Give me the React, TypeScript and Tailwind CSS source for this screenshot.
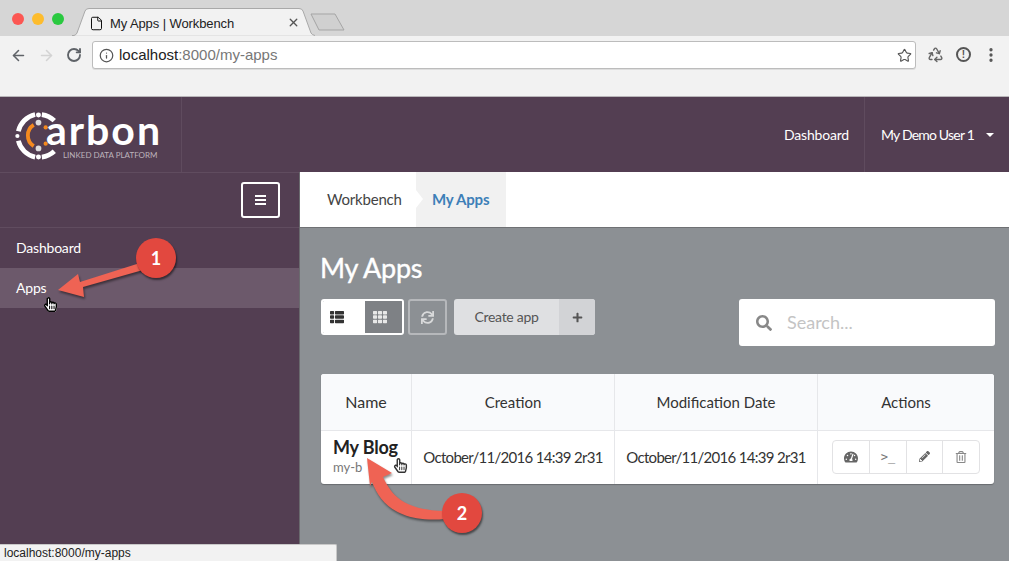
import { ArrowLeft, ArrowRight, RotateCw, Info, Star, Recycle, EllipsisVertical, X, File } from 'lucide-react'
import { FaThList, FaTh, FaSync, FaPlus, FaSearch, FaTachometerAlt, FaPencilAlt, FaRegTrashAlt, FaRegHandPointer, FaHandPointer } from 'react-icons/fa'

function BrowserChrome() {
  return (
    <div className="h-[97px] shrink-0 flex flex-col border-b border-[#b9b6b9] font-['Liberation_Sans',sans-serif]">
      {/* tab strip */}
      <div className="h-[36px] bg-[#d6d6d6] flex items-end">
        <div className="flex gap-[8px] pl-[12px] w-[72px] h-full pt-[13px]">
          <span className="w-3 h-3 rounded-full bg-[#fc5753]" />
          <span className="w-3 h-3 rounded-full bg-[#fdbc2d]" />
          <span className="w-3 h-3 rounded-full bg-[#2ac940]" />
        </div>
        <div className="relative w-[244px] h-[28px] flex items-center pl-[17px] pt-[3px]">
          <svg className="absolute inset-0" width="244" height="28" viewBox="0 0 244 28">
            <path d="M0 27.5 H2 Q4 27 5 25 L13 3 Q14 .5 17 .5 H227 Q230 .5 231 3 L239 25 Q240 27 243 27.5" fill="#f2f2f2" stroke="#a9a9a9" />
          </svg>
          <File size={15} strokeWidth={1.6} className="relative text-[#111]" />
          <span className="relative ml-[6px] text-[13px] tracking-[-0.1px] text-[#222]">My Apps | Workbench</span>
          <X size={13} strokeWidth={2.5} className="absolute left-[215px] top-[8px] text-[#555]" />
        </div>
        <svg width="36" height="20" viewBox="0 0 36 20" className="-ml-[6px] mb-[3px]">
          <path d="M1 1 H25 L34 17 H9 Z" fill="#d0d0d0" stroke="#a5a5a5" strokeLinejoin="round" />
        </svg>
      </div>
      {/* toolbar */}
      <div className="flex-1 bg-[#f2f2f2] flex items-start pt-[5px] pl-[10px] pr-[9px]">
        <ArrowLeft size={17} strokeWidth={2.2} className="text-[#5f6368] mt-[6px]" />
        <ArrowRight size={17} strokeWidth={2.2} className="text-[#d3d3d3] ml-[11px] mt-[6px]" />
        <RotateCw size={16} strokeWidth={2.8} className="text-[#5f6368] ml-[11px] mt-[6px]" />
        <div className="ml-[10px] w-[824px] h-[28px] bg-white border border-[#bcbcbc] rounded-[3px] flex items-center pl-[6px] pr-[3px] shadow-[0_1px_0_#ddd]">
          <Info size={15} strokeWidth={2} className="text-[#555]" />
          <span className="ml-[5px] text-[15px] text-[#222]">localhost<span className="text-[#777]">:8000/my-apps</span></span>
          <Star size={15} strokeWidth={1.8} className="ml-auto text-[#555]" />
        </div>
        <Recycle size={17} strokeWidth={2} className="ml-[11px] mt-[5px] text-[#666]" />
        <span className="ml-[12px] mt-[6px] w-[15px] h-[15px] rounded-full border-2 border-[#555] flex items-center justify-center text-[10px] leading-none font-bold text-[#555]">!</span>
        <EllipsisVertical size={18} strokeWidth={2.4} className="ml-[11px] mt-[5px] text-[#555]" />
      </div>
    </div>
  )
}

function CarbonLogo() {
  return (
    <div className="flex items-start">
      <svg width="46" height="50" viewBox="0 0 48 50" className="mt-[1px] shrink-0">
        <g fill="none" stroke="#fff" strokeWidth="5">
          <path d="M3.5 20 A23 23 0 0 1 21 2.6" />
          <path d="M28 2.6 A23 23 0 0 1 41 9" />
          <path d="M3.5 30 A23 23 0 0 0 21 47" />
          <path d="M28 47 A23 23 0 0 0 41 41" />
        </g>
        <circle cx="24.5" cy="3" r="2.6" fill="#fff" />
        <circle cx="24.5" cy="47" r="2.6" fill="#fff" />
        <circle cx="2.5" cy="25" r="2.2" fill="#fff" />
        <circle cx="24.5" cy="11" r="3" fill="#ddd" />
        <circle cx="24.5" cy="38" r="3" fill="#ddd" />
        <circle cx="32" cy="16" r="2.2" fill="#f58a1f" />
        <circle cx="32" cy="33" r="2.2" fill="#f58a1f" />
        <path d="M19.5 13.5 A13 13 0 0 0 19.5 35.5" fill="none" stroke="#f58a1f" strokeWidth="4" />
      </svg>
      <div className="flex flex-col -ml-[15px]">
        <span className="text-[41px] leading-[38px] font-bold tracking-[2px] text-white mt-[1px]">arbon</span>
        <span className="text-[8px] leading-[10px] text-[#bdb3bb] ml-[17px] mt-[1px] whitespace-nowrap">LINKED DATA PLATFORM</span>
      </div>
    </div>
  )
}

function Header() {
  return (
    <div className="h-[75px] shrink-0 bg-[#533e52] flex text-white">
      <div className="w-[182px] border-r border-[#5f4b5e] pl-[15px] pt-[13px]">
        <CarbonLogo />
      </div>
      <div className="flex-1 flex justify-end">
        <span className="self-center text-[14px] tracking-[-0.2px] mr-[15px]">Dashboard</span>
        <div className="w-[145px] border-l border-[#5f4b5e] flex items-center pl-[16px] text-[14px] tracking-[-0.8px] whitespace-nowrap">
          My Demo User 1
          <span className="ml-[12px] w-0 h-0 border-x-[4px] border-x-transparent border-t-[4px] border-t-white" />
        </div>
      </div>
    </div>
  )
}

function Sidebar() {
  return (
    <div className="w-[300px] shrink-0 bg-[#533e52] text-white text-[14px] tracking-[-0.2px] border-r border-[#6a6a6e]">
      <div className="h-[56px] border-b border-[#604c5f] border-t flex items-center justify-end pr-[19px]">
        <div className="w-[39px] h-[36px] border-2 border-white rounded-[3px] flex flex-col items-center justify-center gap-[2px]">
          <span className="w-[11px] h-[2px] bg-white" />
          <span className="w-[11px] h-[2px] bg-white" />
          <span className="w-[11px] h-[2px] bg-white" />
        </div>
      </div>
      <div className="h-[40px] flex items-center pl-[16px] pb-[2px]">Dashboard</div>
      <div className="h-[40px] flex items-center pl-[16px] pb-[2px] bg-[#6c596b]">Apps</div>
    </div>
  )
}

function Breadcrumb() {
  return (
    <div className="h-[56px] shrink-0 bg-white flex border-b border-[#6f7174]">
      <span className="w-[116px] pl-[27px] self-center text-[15px] tracking-[-0.2px] text-[#444]">Workbench</span>
      <div className="w-[90px] bg-[#f1f1f1] flex items-center pl-[16px] text-[15px] font-bold text-[#3d7fb8] tracking-[-0.2px] relative">
        <span className="absolute left-0 top-[18px] w-0 h-0 border-y-[9px] border-y-transparent border-l-[7px] border-l-white" />
        My Apps
      </div>
    </div>
  )
}

function Toolbar() {
  return (
    <div className="flex items-start mt-[13px] pr-[14px]">
      <div className="w-[83px] h-[36px] rounded-[3px] border-2 border-white flex overflow-hidden bg-[#8c9094]">
        <div className="w-[42px] bg-white flex items-center pl-[7px] text-[#333]"><FaThList size={14} /></div>
        <div className="flex-1 bg-[#7e8185] flex items-center pl-[8px] text-[#e8e8e8]"><FaTh size={14} /></div>
      </div>
      <div className="ml-[4px] w-[39px] h-[36px] rounded-[3px] border-2 border-[#b6b8bb] flex items-center justify-center text-[#d8d9da]">
        <FaSync size={13} />
      </div>
      <div className="ml-[7px] w-[141px] h-[36px] rounded-[3px] bg-[#dfe0e2] flex text-[#555] overflow-hidden">
        <span className="w-[105px] flex items-center justify-center pb-[1px] text-[14px] tracking-[-0.3px]">Create app</span>
        <span className="flex-1 bg-[#d2d3d6] flex items-center justify-center"><FaPlus size={11} /></span>
      </div>
      <div className="ml-auto w-[256px] h-[47px] bg-white rounded-[3px] flex items-center pl-[17px]">
        <FaSearch size={16} className="text-[#888]" />
        <span className="ml-[15px] text-[18px] text-[#c4c4c4]">Search...</span>
      </div>
    </div>
  )
}

const headers = [
  { label: 'Name', width: 'w-[91px]', size: 'text-[16px]' },
  { label: 'Creation', width: 'w-[203px]', size: 'text-[15px]' },
  { label: 'Modification Date', width: 'w-[203px]', size: 'text-[15px]' },
  { label: 'Actions', width: 'flex-1', size: 'text-[15px]' },
]

function AppsTable() {
  return (
    <div className="w-[673px] mt-[28px] bg-white rounded-[3px] shadow-[0_1px_1px_rgba(0,0,0,0.25)] text-[#333] overflow-hidden">
      <div className="h-[57px] flex bg-[#f9fafc] border-b border-[#e6e7ea]">
        {headers.map((h, i) => (
          <div key={h.label} className={`${h.width} ${h.size} flex items-center justify-center ${i < 3 ? 'border-r border-[#e6e7ea]' : ''}`}>
            {h.label}
          </div>
        ))}
      </div>
      <div className="h-[53px] flex">
        <div className="w-[91px] border-r border-[#e6e7ea] pl-[12px] pt-[6px]">
          <div className="text-[18px] leading-[20px] font-bold tracking-[-0.2px] text-[#222] whitespace-nowrap">My Blog</div>
          <div className="text-[13px] leading-[16px] mt-[2px] text-[#777]">my-b</div>
        </div>
        <div className="w-[203px] border-r border-[#e6e7ea] flex items-center justify-center text-[15px] tracking-[-0.7px] whitespace-nowrap">October/11/2016 14:39 2r31</div>
        <div className="w-[203px] border-r border-[#e6e7ea] flex items-center justify-center text-[15px] tracking-[-0.7px] whitespace-nowrap">October/11/2016 14:39 2r31</div>
        <div className="flex-1 flex items-center pl-[14px]">
          <div className="w-[148px] h-[34px] border border-[#e2e2e4] rounded-[4px] flex text-[#666] mt-[-2px]">
            <span className="w-[37px] border-r border-[#e2e2e4] flex items-center justify-center"><FaTachometerAlt size={14} /></span>
            <span className="w-[37px] border-r border-[#e2e2e4] flex items-center justify-center text-[12px] text-[#777] font-['DejaVu_Sans_Mono',monospace]">&gt;_</span>
            <span className="w-[36px] border-r border-[#e2e2e4] flex items-center justify-center"><FaPencilAlt size={11} /></span>
            <span className="flex-1 flex items-center justify-center text-[#888]"><FaRegTrashAlt size={12} /></span>
          </div>
        </div>
      </div>
    </div>
  )
}

function Annotations() {
  return (
    <>
      <FaHandPointer size={15} className="absolute left-[43px] top-[297px] text-white" />
      <FaRegHandPointer size={15} className="absolute left-[43px] top-[297px] text-black" />
      <FaHandPointer size={15} className="absolute left-[393px] top-[458px] text-white" />
      <FaRegHandPointer size={15} className="absolute left-[393px] top-[458px] text-[#333]" />
      <svg className="absolute inset-0 pointer-events-none drop-shadow-[1px_2px_1px_rgba(0,0,0,0.45)]" width="1009" height="561" viewBox="0 0 1009 561">
        <path d="M58 290 L78 274 L80 282 L140 263 L143 270 L83 287 L84 297 Z" fill="#ef6354" />
        <path d="M367 458 L392 473 L383 477 C391 494 402 510 445 511 L445 519 C398 523 380 503 372 482 L370 486 Z" fill="#ef6354" />
      </svg>
      <div className="absolute left-[136px] top-[238px] w-[40px] h-[40px] rounded-full bg-[#e2483f] shadow-[1px_2px_2px_rgba(0,0,0,0.5)] flex items-center justify-center text-white text-[18px] font-bold">1</div>
      <div className="absolute left-[442px] top-[493px] w-[40px] h-[40px] rounded-full bg-[#e2483f] shadow-[1px_2px_2px_rgba(0,0,0,0.5)] flex items-center justify-center text-white text-[18px] font-bold">2</div>
    </>
  )
}

export default function App() {
  return (
    <div className="relative w-[1009px] h-[561px] overflow-hidden flex flex-col font-['Lato',sans-serif]">
      <BrowserChrome />
      <Header />
      <div className="flex-1 flex min-h-0">
        <Sidebar />
        <div className="flex-1 flex flex-col bg-[#8c9094]">
          <Breadcrumb />
          <div className="pl-[21px] pt-[22px]">
            <h1 className="-ml-px text-[27px] leading-[36px] text-white font-normal tracking-[-0.3px] [-webkit-text-stroke:0.4px_white]">My Apps</h1>
            <Toolbar />
            <AppsTable />
          </div>
        </div>
      </div>
      <Annotations />
      <div className="absolute left-0 bottom-0 w-[337px] h-[17px] bg-[#f2f2f2] border-t border-r border-[#c8c8c8] rounded-tr-[2px] pl-[4px] text-[12px] leading-[16px] text-[#222] font-['Liberation_Sans',sans-serif]">
        localhost:8000/my-apps
      </div>
    </div>
  )
}
